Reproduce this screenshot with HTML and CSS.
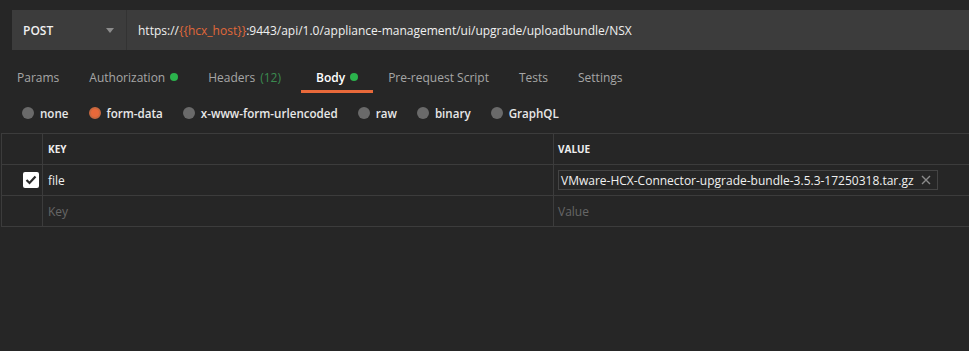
FILE: index.html
```html
<!DOCTYPE html>
<html lang="en">
<head>
    <meta charset="UTF-8">
    <title>Upload bundle</title>
    <link rel="stylesheet" href="styles.css">
</head>
<body>
    <div class="request-bar">
        <div class="method">
            <span>POST</span>
            <span class="caret"></span>
        </div>
        <div class="url">https://<span class="var">{{hcx_host}}</span>:9443/api/1.0/appliance-management/ui/upgrade/uploadbundle/NSX</div>
    </div>

    <nav class="tabs">
        <a class="tab">Params</a>
        <a class="tab">Authorization <span class="dot"></span></a>
        <a class="tab headers">Headers <span class="count">(12)</span></a>
        <a class="tab active">Body <span class="dot"></span></a>
        <a class="tab">Pre-request Script</a>
        <a class="tab">Tests</a>
        <a class="tab">Settings</a>
    </nav>

    <div class="body-types">
        <label class="radio"><span class="circle"></span>none</label>
        <label class="radio"><span class="circle selected"></span>form-data</label>
        <label class="radio"><span class="circle"></span>x-www-form-urlencoded</label>
        <label class="radio"><span class="circle"></span>raw</label>
        <label class="radio"><span class="circle"></span>binary</label>
        <label class="radio"><span class="circle"></span>GraphQL</label>
    </div>

    <div class="params">
        <div class="row head">
            <div class="cell check"></div>
            <div class="cell key">KEY</div>
            <div class="cell value">VALUE</div>
        </div>
        <div class="row">
            <div class="cell check">
                <span class="checkbox">
                    <svg width="12" height="10" viewBox="0 0 12 10"><path d="M1.5 5 L4.5 8 L10.5 1.5" fill="none" stroke="#2a2a2a" stroke-width="2.2"/></svg>
                </span>
            </div>
            <div class="cell key">file</div>
            <div class="cell value">
                <div class="file-chip">
                    <span>VMware-HCX-Connector-upgrade-bundle-3.5.3-17250318.tar.gz</span>
                    <svg width="10" height="10" viewBox="0 0 10 10"><path d="M1 1 L9 9 M9 1 L1 9" stroke="#8a8a8a" stroke-width="1.4"/></svg>
                </div>
            </div>
        </div>
        <div class="row">
            <div class="cell check"></div>
            <div class="cell key placeholder">Key</div>
            <div class="cell value placeholder">Value</div>
        </div>
    </div>
</body>
</html>
```

FILE: styles.css
```css
body {
    margin: 0;
    padding: 0;
    background-color: #262626;
    color: #e2e2e2;
    font-family: "Open Sans", Arial, sans-serif;
    font-size: 12px;
    width: 969px;
    height: 351px;
    overflow: hidden;
}
.request-bar {
    display: flex;
    height: 40px;
    margin: 10px 0 0 12px;
    background-color: #3c3c3c;
}
.method {
    width: 115px;
    display: flex;
    align-items: center;
    justify-content: space-between;
    padding: 0 12px 0 11px;
    box-sizing: border-box;
    border-right: 1px solid #333;
    font-weight: 600;
    font-size: 12px;
    color: #f0f0f0;
}
.caret {
    width: 0;
    height: 0;
    border-left: 4px solid transparent;
    border-right: 4px solid transparent;
    border-top: 5px solid #8c8c8c;
}
.url {
    display: flex;
    align-items: center;
    padding-left: 11px;
    font-size: 12px;
    color: #f0f0f0;
}
.url .var {
    color: #e0683a;
}
.tabs {
    display: flex;
    padding-left: 2px;
}
.tab {
    display: flex;
    align-items: center;
    height: 18px;
    padding: 18px 15px 4px;
    color: #a6a6a6;
    font-size: 12px;
    border-bottom: 3px solid transparent;
}
.tab.headers {
    padding-right: 20px;
}
.tab.active {
    color: #fff;
    font-weight: 600;
    border-bottom-color: #e8693a;
}
.dot {
    display: inline-block;
    width: 8px;
    height: 8px;
    border-radius: 50%;
    background-color: #2bb24c;
    margin-left: 5px;
}
.count {
    color: #3b8a50;
    margin-left: 5px;
}
.body-types {
    display: flex;
    align-items: center;
    height: 40px;
    padding-left: 22px;
    gap: 20px;
}
.radio {
    display: flex;
    align-items: center;
    gap: 6px;
    color: #e8e8e8;
    font-size: 11.6px;
    font-weight: 600;
}
.circle {
    width: 12px;
    height: 12px;
    border-radius: 50%;
    background-color: #6a6a6a;
    box-sizing: border-box;
}
.circle.selected {
    background-color: #e8693a;
    border: 2px solid #c9683f;
}
.params {
    border-top: 1px solid #3c3c3c;
    border-left: 1px solid #3c3c3c;
    margin-left: 1px;
}
.row {
    display: flex;
    height: 31px;
    border-bottom: 1px solid #3c3c3c;
    box-sizing: border-box;
}
.cell {
    display: flex;
    align-items: center;
    padding-left: 5px;
    box-sizing: border-box;
}
.cell.check {
    width: 41px;
    padding-left: 21px;
    border-right: 1px solid #3c3c3c;
}
.cell.key {
    width: 511px;
    border-right: 1px solid #3c3c3c;
    color: #f0f0f0;
}
.cell.value {
    flex: 1;
    padding-left: 4px;
}
.row.head .cell {
    font-size: 10px;
    font-weight: 700;
    color: #eee;
}
.checkbox {
    width: 16px;
    height: 16px;
    border-radius: 2px;
    background-color: #fff;
    display: flex;
    align-items: center;
    justify-content: center;
}
.file-chip {
    display: flex;
    align-items: center;
    justify-content: space-between;
    width: 380px;
    height: 20px;
    border: 1px solid #444;
    box-sizing: border-box;
    padding: 0 6px 0 2px;
    color: #f0f0f0;
    font-size: 12px;
}
.placeholder {
    color: #666 !important;
}
```
